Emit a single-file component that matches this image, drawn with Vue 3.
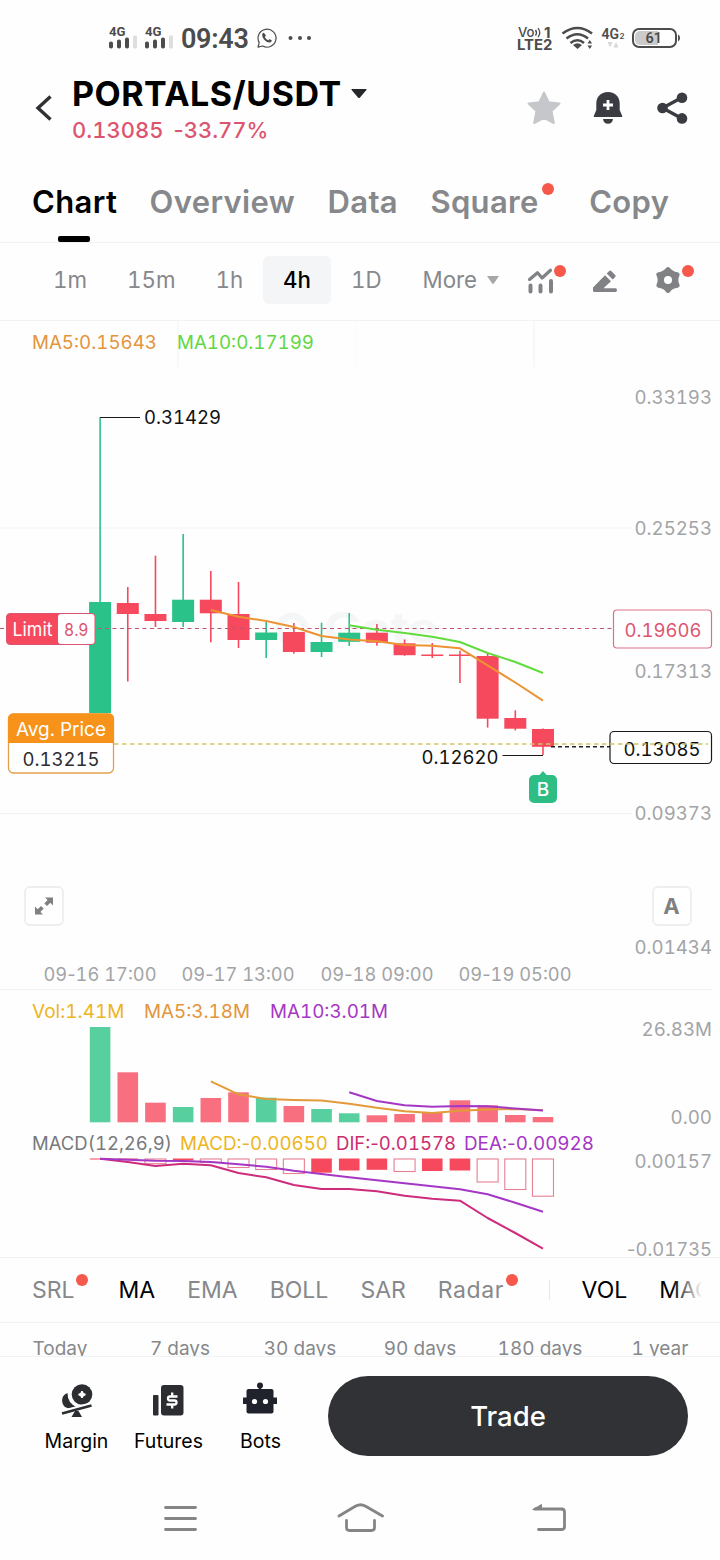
<template>
  <div class="screen">
    <div class="status-bar">
      <svg class="signals" width="70" height="30" viewBox="105 22 70 30">
        <g v-for="x in [109, 145]" :key="x">
          <text :x="x" y="35.500" class="net-label" textLength="16.500" lengthAdjust="spacingAndGlyphs">4G</text>
          <rect :x="x" y="41.500" width="4" height="7" rx="1.8" />
          <rect :x="x + 8" y="39.500" width="4" height="9" rx="1.8" />
          <rect :x="x + 16" y="37.500" width="4" height="11" rx="1.8" />
          <rect :x="x + 24" y="35.500" width="4" height="13" rx="1" class="dim" />
        </g>
      </svg>
      <span class="clock">09:43</span>
      <svg class="whatsapp" width="22" height="22" viewBox="0 0 22 22">
        <path d="M2 20.200 3.200 15.600A9 9 0 1 1 6.600 19Z" fill="none" stroke="#4c4c4c" stroke-width="1.200" stroke-linejoin="round" />
        <path d="M7.800 5.800c-1 .2-1.800 1.200-1.600 2.600.6 3.400 3.400 6.400 7 7 1.400.2 2.500-.6 2.700-1.800l-2.400-1.500-1.200 1.200c-1.500-.6-2.800-1.900-3.500-3.400L10 8.500Z" fill="#4c4c4c" />
      </svg>
      <svg class="dots" width="24" height="6" viewBox="0 0 24 6">
        <circle cx="2.500" cy="3" r="2" /><circle cx="12" cy="3" r="2" /><circle cx="21" cy="3" r="2" />
      </svg>
      <svg class="status-right" width="170" height="34" viewBox="515 20 170 34">
        <text x="518" y="36.500" class="volte light" textLength="16.500" lengthAdjust="spacingAndGlyphs">Vo</text>
        <path d="M535.500 30q2 2.800 0 5.600M538 28.200q3.400 4.400 0 9" fill="none" stroke="#4c4c4c" stroke-width="1.300" />
        <text x="544" y="37.500" class="volte">1</text>
        <text x="517" y="50" class="volte" textLength="35.500" lengthAdjust="spacingAndGlyphs">LTE2</text>
        <g fill="none" stroke="#4c4c4c" stroke-width="2.600">
          <path d="M562.500 33.500q15-11 29.500 0" />
          <path d="M566.500 38.500q11-8.500 21.500 0" />
          <path d="M570.500 43q7-5.500 13.500 0" />
        </g>
        <path d="M573 45q4.500-3.500 9 0l-4.500 4Z" fill="#4c4c4c" />
        <path d="M587.500 43.500l2.300-3.500 2.300 3.500ZM587.500 45.500l2.300 3.500 2.300-3.500Z" fill="#4c4c4c" />
        <text x="601.500" y="38.500" class="net-big" textLength="17.500" lengthAdjust="spacingAndGlyphs">4G</text>
        <text x="619.500" y="38.500" class="net-sub">2</text>
        <path d="M607.500 42h5l-2.500 5.500ZM613.500 47.500h5l-2.500-5.500Z" fill="#d8d8d8" />
        <rect x="633" y="29" width="43" height="18" rx="6" fill="#fff" stroke="#4c4c4c" stroke-width="2" />
        <path d="M640 31h18v14h-18a5 5 0 0 1-5-5v-4a5 5 0 0 1 5-5Z" fill="#cbcbcb" />
        <path d="M678 34.500q2 .5 2 3.500t-2 3.500Z" fill="#4c4c4c" />
        <text x="645.500" y="43" class="battery" textLength="16.500" lengthAdjust="spacingAndGlyphs">61</text>
      </svg>
    </div>

    <header class="pair-header">
      <svg class="back" width="20" height="30" viewBox="0 0 20 30">
        <path d="M18.500 3.500 6 15 18.500 26.500" fill="none" stroke="#2f3135" stroke-width="3.400" />
      </svg>
      <div class="pair">
        <div class="pair-name">
          PORTALS/USDT
          <svg width="16" height="10" viewBox="0 0 16 10"><path d="M1 0h14q1 0 .4 1L9 8.500q-1 1-2 0L.6 1Q0 0 1 0Z" fill="#25272b" /></svg>
        </div>
        <div class="pair-price"><span>0.13085</span><span><i class="hyphen">-</i>33.77%</span></div>
      </div>
      <div class="header-actions">
        <svg width="36" height="36" viewBox="0 0 36 36">
          <path d="M18 2.500 22.600 12.200 33.500 13.600 25.500 21 27.800 33 18 27.800 8.200 33 10.500 21 2.500 13.600 13.400 12.200Z" fill="#c5c7ca" stroke="#c5c7ca" stroke-width="2" stroke-linejoin="round" />
        </svg>
        <svg width="36" height="36" viewBox="0 0 36 36">
          <path d="M18 2C10.500 2 6.300 7.200 6.300 13.500V20L3.800 26V27H32.200V26L29.700 20V13.500C29.700 7.200 25.500 2 18 2Z" fill="#3b3c42" />
          <path d="M13 29h10q-.5 4.800-5 4.800T13 29Z" fill="#3b3c42" />
          <path d="M18 10v10M13 15h10" stroke="#fff" stroke-width="2.800" />
        </svg>
        <svg width="36" height="36" viewBox="0 0 36 36">
          <path d="M28 7.500 8.500 18l19.500 10.500" fill="none" stroke="#3b3c42" stroke-width="3.400" />
          <circle cx="28" cy="7.700" r="5.300" fill="#3b3c42" />
          <circle cx="8.500" cy="18" r="5.300" fill="#3b3c42" />
          <circle cx="28" cy="28.400" r="5.300" fill="#3b3c42" />
        </svg>
      </div>
    </header>

    <nav class="tabs">
      <span v-for="tab in tabs" :key="tab.label" class="tab" :class="{ active: tab.label === activeTab, dotted: tab.dot }" @click="activeTab = tab.label">{{ tab.label }}</span>
    </nav>

    <div class="intervals">
      <span v-for="item in intervals" :key="item" class="interval" :class="{ active: item === activeInterval }" @click="activeInterval = item">{{ item }}</span>
      <span class="interval more">More
        <svg width="12" height="8" viewBox="0 0 12 8"><path d="M0 0h12L6.800 7.500q-.8.8-1.600 0Z" fill="#a5a7aa" /></svg>
      </span>
      <div class="tools">
        <svg width="32" height="32" viewBox="525 264 32 32">
          <path d="M529.500 279.500l8-6.800 4.600 5.300 8.400-7.700" fill="none" stroke="#808286" stroke-width="3.200" stroke-linecap="round" stroke-linejoin="round" />
          <path d="M530.500 285.500v6M540.500 285.500v6M551 281v10.500" stroke="#808286" stroke-width="4" stroke-linecap="round" />
        </svg>
        <svg width="32" height="32" viewBox="588 264 32 32">
          <path d="M592 287.500 604 275.200 610 281.300 602.500 288.200h12q1.500 0 1.500 1.900t-1.500 1.900H593.500q-1.500 0-1.500-1.500Z" fill="#808286" />
          <path d="M605.700 273.500 608.200 270.900q1-1 2 0L614.200 275q1 1 0 2L611.700 279.600Z" fill="#808286" />
        </svg>
        <svg width="32" height="32" viewBox="-16 -16 32 32">
          <path d="M0-10.500Q3.300-6 9.200-5.400Q6.600 0 9.200 5.400Q3.300 6 0 10.500Q-3.300 6-9.200 5.400Q-6.600 0-9.200-5.400Q-3.300-6 0-10.500Z" fill="#808286" stroke="#808286" stroke-width="4.800" stroke-linejoin="round" />
          <circle r="4" fill="#fff" />
        </svg>
      </div>
    </div>

    <svg class="pane" width="720" height="669" viewBox="0 321 720 669">
      <path d="M178 321v46M534 321v46M0 528h632M0 813.500h632M0 989.500h712" class="grid" />
      <path d="M356.500 321v46" class="grid faint" />
      <g class="watermark">
        <circle cx="292" cy="629" r="13" />
        <text x="324" y="643" textLength="114" lengthAdjust="spacingAndGlyphs">Gate</text>
      </g>
      <text x="32" y="349" class="t orange" textLength="125" lengthAdjust="spacingAndGlyphs">MA5:0.15643</text>
      <text x="177" y="349" class="t lime" textLength="137" lengthAdjust="spacingAndGlyphs">MA10:0.17199</text>

      <g v-for="(c, i) in candles" :key="i" :class="c[0] > 0 ? 'up' : 'down'">
        <rect :x="cx(i) - 0.8" :y="c[1]" width="1.6" :height="c[4] - c[1]" />
        <rect :x="cx(i) - 11" :y="c[2]" width="22" :height="c[3] - c[2]" />
      </g>
      <path d="M0 628.500H613" stroke="#bd5670" stroke-width="1" stroke-dasharray="4 3.500" />
      <polyline :points="line(priceMa5, 4)" class="line" stroke="#ec9332" />
      <polyline :points="line(priceMa10, 9)" class="line" stroke="#62dc3d" />

      <path d="M100 417.500H140M502.500 755.500H543" class="marker" />
      <text x="144" y="423.500" class="t black" textLength="77" lengthAdjust="spacingAndGlyphs">0.31429</text>
      <text x="421.500" y="763.500" class="t black" textLength="77" lengthAdjust="spacingAndGlyphs">0.12620</text>
      <path d="M551 746.700H610" stroke="#222" stroke-width="1.400" stroke-dasharray="4 3" />

      <text v-for="l in priceLabels" :key="l[0]" x="634.500" :y="l[1]" class="t gray" textLength="77.500" lengthAdjust="spacingAndGlyphs">{{ l[0] }}</text>
      <rect x="613.500" y="610" width="98" height="38" rx="3.500" fill="#fff" stroke="#dc7088" stroke-width="1.200" />
      <text x="624.500" y="636.500" class="t rose" textLength="77" lengthAdjust="spacingAndGlyphs">0.19606</text>
      <rect x="610" y="731.500" width="101.500" height="32" rx="4" fill="#fff" stroke="#1a1a1a" stroke-width="1.200" />
      <text x="623.500" y="755.500" class="t black" textLength="77" lengthAdjust="spacingAndGlyphs">0.13085</text>
      <path d="M114 744H708" stroke="#cfc36c" stroke-width="1.400" stroke-dasharray="4.500 3.500" />

      <rect x="6.500" y="613.500" width="88.500" height="31" rx="3.500" fill="#f7495d" stroke="#dc5570" />
      <rect x="58" y="614" width="36.500" height="30" rx="3" fill="#fff" />
      <text x="12.500" y="636" class="t white" textLength="40" lengthAdjust="spacingAndGlyphs">Limit</text>
      <text x="64" y="636" class="t rose small" textLength="24.500" lengthAdjust="spacingAndGlyphs">8.9</text>

      <rect x="8.500" y="714" width="105" height="59" rx="5" fill="#fff" stroke="#e2a04a" stroke-width="1.300" />
      <path d="M8 743v-24q0-5.500 5.500-5.500h95q5.500 0 5.500 5.500v24Z" fill="#f7931a" />
      <text x="16" y="736" class="t avg" textLength="90" lengthAdjust="spacingAndGlyphs">Avg. Price</text>
      <text x="22.500" y="765.500" class="t dark" textLength="77" lengthAdjust="spacingAndGlyphs">0.13215</text>

      <path d="M538.500 776l4.500-5 4.500 5Z" fill="#2ebd85" />
      <rect x="529" y="775" width="28" height="28" rx="5" fill="#2ebd85" />
      <text x="543" y="796" class="buy" text-anchor="middle">B</text>

      <rect x="25" y="887" width="38" height="38" rx="5" class="tool-box" />
      <path d="M45 897.500h8v8l-2.700-2.700-3.300 3.300-2.700-2.700 3.300-3.300ZM43 914.500h-8v-8l2.700 2.700 3.300-3.300 2.700 2.700-3.300 3.300Z" fill="#808080" />
      <rect x="653" y="887" width="38" height="38" rx="5" class="tool-box" />
      <text x="671.500" y="914" class="auto" text-anchor="middle">A</text>

      <text v-for="d in dates" :key="d[1]" :x="d[2]" y="981" class="t gray" textLength="113" lengthAdjust="spacingAndGlyphs">09<tspan class="hyphen">-</tspan>{{ d[0] }}&nbsp;{{ d[1] }}</text>
    </svg>

    <svg class="pane" width="720" height="140" viewBox="0 990 720 140">
      <text x="32" y="1018" class="t yellow" textLength="92.500" lengthAdjust="spacingAndGlyphs">Vol:1.41M</text>
      <text x="144" y="1018" class="t orange" textLength="106" lengthAdjust="spacingAndGlyphs">MA5:3.18M</text>
      <text x="270" y="1018" class="t purple" textLength="118" lengthAdjust="spacingAndGlyphs">MA10:3.01M</text>
      <rect v-for="(y, i) in volumes" :key="i" :x="cx(i) - 10.3" :y="y" width="20.6" :height="1122.3 - y" :class="candles[i][0] > 0 ? 'vol-up' : 'vol-down'" />
      <polyline :points="line(volMa5, 4)" class="line" stroke="#e39a38" />
      <polyline :points="line(volMa10, 9)" class="line" stroke="#a437c4" />
      <text x="641.500" y="1035.500" class="t gray" textLength="70.500" lengthAdjust="spacingAndGlyphs">26.83M</text>
      <text x="670.500" y="1123.500" class="t gray" textLength="41.500" lengthAdjust="spacingAndGlyphs">0.00</text>
    </svg>

    <svg class="pane" width="720" height="128" viewBox="0 1130 720 128">
      <text x="32" y="1150" class="t gray-dark" textLength="140" lengthAdjust="spacingAndGlyphs">MACD(12,26,9)</text>
      <text x="180" y="1150" class="t yellow" textLength="148" lengthAdjust="spacingAndGlyphs">MACD:<tspan class="hyphen">-</tspan>0.00650</text>
      <text x="336" y="1150" class="t magenta" textLength="120" lengthAdjust="spacingAndGlyphs">DIF:<tspan class="hyphen">-</tspan>0.01578</text>
      <text x="464" y="1150" class="t purple" textLength="130" lengthAdjust="spacingAndGlyphs">DEA:<tspan class="hyphen">-</tspan>0.00928</text>
      <g v-for="(m, i) in macd" :key="i">
        <rect v-if="m[1]" :x="cx(i) - 10.3" y="1158.500" width="20.6" :height="m[0] - 1158.5" fill="#f7495d" />
        <rect v-else :x="cx(i) - 10.5" y="1159" width="21" :height="m[0] - 1159" fill="#fff" stroke="#e87f92" stroke-width="1.100" />
      </g>
      <polyline :points="line(dif, 0)" class="line" stroke="#cd2c7c" />
      <polyline :points="line(dea, 0)" class="line" stroke="#a437c4" />
      <text x="634.500" y="1167.500" class="t gray" textLength="77.500" lengthAdjust="spacingAndGlyphs">0.00157</text>
      <path d="M0 1257.500H720" class="grid" />
      <text x="627" y="1255.500" class="t gray" textLength="85" lengthAdjust="spacingAndGlyphs"><tspan class="hyphen">-</tspan>0.01735</text>
    </svg>

    <div class="indicators">
      <span v-for="name in mainIndicators" :key="name.label" class="indicator" :class="{ active: name.active, dotted: name.dot }">{{ name.label }}</span>
      <i class="divider"></i>
      <span class="indicator active">VOL</span>
      <span class="indicator active">MACD</span>
    </div>

    <div class="ranges">
      <span v-for="r in ranges" :key="r">{{ r }}</span>
    </div>

    <footer class="bottom">
      <div class="shortcut">
        <svg width="36" height="36" viewBox="58 1382 36 36">
          <path d="M67.500 1393A8 8 0 0 0 68 1408.300Q74 1409 76.500 1407Q67.500 1403 67.500 1393Z" fill="#2c2d31" />
          <circle cx="82" cy="1394.500" r="10.300" fill="#2c2d31" />
          <path d="M82 1391Q82.500 1394 85.500 1394.500 82.500 1395 82 1398 81.500 1395 78.500 1394.500 81.500 1394 82 1391Z" fill="#fff" stroke="#fff" stroke-width="1.400" />
          <path d="M61.500 1412.500 91.500 1404.500" stroke="#fff" stroke-width="4.600" />
          <path d="M62 1413.500 91.500 1405.500" stroke="#2c2d31" stroke-width="2.600" />
          <path d="M75 1411h3.500l3.500 6H71.500Z" fill="#2c2d31" />
        </svg>
        <span>Margin</span>
      </div>
      <div class="shortcut">
        <svg width="36" height="36" viewBox="150 1382 36 36">
          <rect x="153" y="1395" width="5.500" height="20.500" rx="1" fill="#2c2d31" />
          <rect x="161" y="1385" width="22.500" height="30.500" rx="3" fill="#2c2d31" />
          <path d="M177.500 1396.500H170a2 2 0 0 0 0 4h4.500a2 2 0 0 1 0 4H166.500M172.200 1392.500v4M172.200 1404.500v4" fill="none" stroke="#fff" stroke-width="2.300" />
        </svg>
        <span>Futures</span>
      </div>
      <div class="shortcut">
        <svg width="36" height="36" viewBox="242 1382 36 36">
          <rect x="246.500" y="1389" width="27" height="24.500" rx="2" fill="#20222c" />
          <path d="M243 1397.500h34v6.500h-34Z" fill="#20222c" />
          <circle cx="260" cy="1385.500" r="3" fill="#20222c" />
          <path d="M260 1385v6" stroke="#20222c" stroke-width="2.400" />
          <circle cx="254.500" cy="1401.500" r="2.600" fill="#fff" /><circle cx="265.500" cy="1401.500" r="2.600" fill="#fff" />
        </svg>
        <span>Bots</span>
      </div>
      <button class="trade">Trade</button>
    </footer>

    <div class="system-nav">
      <svg width="48" height="36" viewBox="156 1500 48 36"><path d="M165.500 1507.500h30M165.500 1518.500h30M165.500 1529.500h30" /></svg>
      <svg width="48" height="36" viewBox="336 1500 48 36"><path d="M339 1516 354 1507Q360.500 1502.500 367 1507L382.500 1516M346.500 1520.500V1527.500Q346.500 1530.500 349.500 1530.500H371.500Q374.500 1530.500 374.500 1527.500V1520.500" /></svg>
      <svg width="48" height="36" viewBox="524 1500 48 36"><path d="M538.500 1529.500H562Q564.500 1529.500 564.500 1526.500V1512Q564.500 1509 561.500 1509H535" /><path d="M533 1509.500 541.500 1504.500V1509Z" class="solid" /></svg>
    </div>
  </div>
</template>

<script setup>
import { ref } from "vue";

const activeTab = ref("Chart");
const activeInterval = ref("4h");

const tabs = [
  { label: "Chart" },
  { label: "Overview" },
  { label: "Data" },
  { label: "Square", dot: true },
  { label: "Copy" },
];
const intervals = ["1m", "15m", "1h", "4h", "1D"];
const mainIndicators = [
  { label: "SRL", dot: true },
  { label: "MA", active: true },
  { label: "EMA" },
  { label: "BOLL" },
  { label: "SAR" },
  { label: "Radar", dot: true },
];
const ranges = ["Today", "7 days", "30 days", "90 days", "180 days", "1 year"];

// direction, high, body top, body bottom, low
const candles = [
  [1, 417.5, 602, 713, 713],
  [-1, 587, 603, 614, 681.5],
  [-1, 555.7, 614, 621, 627],
  [1, 534, 599.7, 622, 627],
  [-1, 571, 599.7, 613.3, 642.3],
  [-1, 582, 614, 640, 648],
  [1, 622, 632.5, 640, 658],
  [-1, 623, 632, 652, 653.7],
  [1, 622.7, 642, 652, 657],
  [1, 613, 632.7, 641.8, 646],
  [-1, 624, 632.7, 642.7, 645.7],
  [-1, 639.5, 643.3, 655.2, 655.8],
  [-1, 643, 654.5, 656, 658],
  [-1, 650.7, 654.5, 656, 683],
  [-1, 653.7, 656, 718.7, 727.6],
  [-1, 710.3, 718, 728.7, 730.4],
  [-1, 728.5, 729, 746.8, 755],
];
const priceMa5 = [610, 616.7, 621, 627, 636, 639.5, 641.3, 645, 645.7, 648.3, 665.3, 682.5, 700.7];
const priceMa10 = [625.3, 629.7, 633, 636.7, 642, 653, 662, 673];
const priceLabels = [
  ["0.33193", 403.5],
  ["0.25253", 534.5],
  ["0.17313", 677.5],
  ["0.09373", 819.5],
  ["0.01434", 953.5],
];
const dates = [
  ["16", "17:00", 43.5],
  ["17", "13:00", 181.5],
  ["18", "09:00", 320.5],
  ["19", "05:00", 458.5],
];

const volumes = [1027, 1072.3, 1102.7, 1107, 1098, 1092.3, 1097.7, 1106, 1109, 1113.3, 1115.3, 1114, 1112.5, 1100.3, 1105.3, 1115, 1117];
const volMa5 = [1081.3, 1094.3, 1099, 1100, 1100.5, 1103.7, 1107.7, 1111.3, 1113, 1110.7, 1109.5, 1109, 1110.3];
const volMa10 = [1092.3, 1101, 1105.3, 1106.7, 1106, 1106.3, 1108.5, 1110.5];

// bar bottom, filled
const macd = [
  [1159.5, true], [1159, true], [1163.7, false], [1160.5, true], [1162.3, false], [1167.5, false],
  [1169.5, false], [1173.5, false], [1172.7, true], [1170.5, true], [1169.8, true], [1171.5, false],
  [1171, true], [1170.5, true], [1182, false], [1189.5, false], [1196.2, false],
];
const dif = [1158.7, 1162, 1166, 1163.7, 1165.3, 1173, 1177.3, 1185, 1189, 1189, 1191.3, 1195.7, 1198.7, 1200.7, 1218, 1233, 1248.7];
const dea = [1158.7, 1159.7, 1160.7, 1161, 1162, 1164.3, 1166.7, 1170.7, 1174, 1177.3, 1180.3, 1183.3, 1186.3, 1189.3, 1194.3, 1202.7, 1211.7];

function cx(i) {
  return 100.1 + i * 27.68;
}

function line(values, start) {
  return values.map((y, i) => `${cx(i + start)},${y}`).join(" ");
}
</script>

<style>
body {
  margin: 0;
  background: #fefefe;
}
</style>

<style scoped>
.screen {
  width: 720px;
  height: 1560px;
  overflow: hidden;
  background: #fefefe;
  font-family: Inter, "Liberation Sans", sans-serif;
  font-feature-settings: "tnum";
  color: #000;
}
svg {
  display: block;
  flex-shrink: 0;
}
.hyphen {
  font-style: normal;
  font-feature-settings: normal;
}
.status-bar {
  height: 76px;
  display: flex;
  align-items: center;
  padding: 0 35px 0 105px;
  box-sizing: border-box;
  fill: #4c4c4c;
  font-family: Roboto, sans-serif;
}
.signals {
  margin-top: -2px;
}
.dim {
  fill: #dedede;
}
.net-label {
  font: 700 13.5px Roboto, sans-serif;
}
.clock {
  margin-left: 6px;
  width: 66px;
  font-size: 27px;
  font-weight: 600;
  letter-spacing: -0.3px;
  color: #4c4c4c;
  padding-top: 2px;
}
.whatsapp {
  margin-left: 9px;
}
.dots {
  margin-left: 10px;
}
.status-right {
  margin-left: auto;
  margin-top: -2px;
}
.volte {
  font: 700 15px Inter, sans-serif;
}
.light {
  font-weight: 500;
  font-size: 13.5px;
}
.net-big {
  font: 600 15px Roboto, sans-serif;
}
.net-sub {
  font: 600 8px Inter, sans-serif;
}
.battery {
  font: 600 15px Roboto, sans-serif;
}
.pair-header {
  height: 84px;
  display: flex;
  align-items: flex-start;
  padding: 0 30px 0 32px;
}
.back {
  margin-top: 17px;
}
.pair {
  margin-left: 20px;
}
.pair-name {
  display: flex;
  align-items: center;
  gap: 9px;
  font-size: 34px;
  line-height: 36px;
  font-weight: 700;
  letter-spacing: 0.5px;
}
.pair-price {
  display: flex;
  gap: 10px;
  font-size: 22px;
  line-height: 36px;
  font-weight: 500;
  color: #dc5570;
}
.header-actions {
  display: flex;
  gap: 28px;
  margin: 14px 0 0 auto;
}
.tabs {
  height: 82px;
  display: flex;
  gap: 32.4px;
  padding-left: 32px;
  border-bottom: 1px solid #f1f2f3;
}
.tab {
  position: relative;
  line-height: 84px;
  font-size: 31px;
  font-weight: 600;
  letter-spacing: 0.35px;
  color: #86888b;
}
.tab.active {
  color: #000;
}
.tab.active::after {
  content: "";
  position: absolute;
  left: 25.5px;
  bottom: 0;
  width: 32px;
  height: 6px;
  border-radius: 2px;
  background: #000;
}
.tab.dotted {
  margin-right: 18px;
}
.tab.dotted::after,
.indicator.dotted::after {
  content: "";
  position: absolute;
  width: 12px;
  height: 12px;
  border-radius: 50%;
  background: #f6594b;
}
.tab.dotted::after {
  right: -15px;
  top: 23px;
}
.intervals {
  height: 74px;
  display: flex;
  align-items: center;
  padding: 0 0 3px 33px;
  border-bottom: 1px solid #f1f2f3;
  font-size: 22.3px;
  color: #86888b;
}
.interval {
  padding: 0 20px;
  line-height: 48px;
  height: 48px;
}
.interval.active {
  border-radius: 6px;
  background: #f4f5f7;
  color: #000;
  font-weight: 500;
}
.more {
  display: flex;
  align-items: center;
  gap: 10px;
  padding: 0 0 0 21px;
}
.tools {
  position: relative;
  display: flex;
  gap: 31.5px;
  margin: 0 36px 0 auto;
}
.tools::before,
.tools::after {
  content: "";
  position: absolute;
  top: 1px;
  left: 29px;
  width: 12px;
  height: 12px;
  border-radius: 50%;
  background: #f6594b;
}
.tools::after {
  left: 157px;
}
.t {
  font-size: 18.5px;
}
.t.small {
  font-size: 17.5px;
}
.grid {
  fill: none;
  stroke: #f1f2f3;
  stroke-width: 1.2;
}
.grid.faint {
  stroke: #fafafa;
}
.watermark {
  fill: #f5f6f8;
}
.watermark circle {
  fill: none;
  stroke: #f5f6f8;
  stroke-width: 7;
}
.watermark text {
  font-size: 42px;
  font-weight: 700;
}
.line {
  fill: none;
  stroke-width: 2;
  stroke-linejoin: round;
}
.marker {
  fill: none;
  stroke: #1a1a1a;
  stroke-width: 1.2;
}
.up { fill: #2bc289; }
.down { fill: #f7495d; }
.vol-up { fill: #57cf9f; }
.vol-down { fill: #f86f80; }
.orange { fill: #e4943b; }
.lime { fill: #60d843; }
.black { fill: #111; }
.dark { fill: #2c2d31; }
.gray { fill: #a2a4a6; }
.gray-dark { fill: #77797c; }
.rose { fill: #dc5570; }
.white { fill: #fff; }
.avg { fill: #fff; font-size: 19px; }
.yellow { fill: #edb521; }
.purple { fill: #a437c4; }
.magenta { fill: #cd2c6c; }
.buy {
  fill: #fff;
  font-size: 19px;
  font-weight: 500;
}
.tool-box {
  fill: #fff;
  stroke: #eeeeef;
  stroke-width: 1.8;
}
.auto {
  fill: #808080;
  font-size: 22px;
  font-weight: 700;
}
.indicators {
  position: relative;
  height: 64px;
  display: flex;
  align-items: center;
  gap: 32px;
  margin-right: 18px;
  padding-left: 32px;
  overflow: hidden;
  font-size: 23px;
  color: #86888b;
}
.indicators::after {
  content: "";
  position: absolute;
  right: 0;
  top: 0;
  width: 30px;
  height: 64px;
  background: linear-gradient(to right, rgba(254, 254, 254, 0), #fefefe);
}
.indicator {
  position: relative;
  line-height: 64px;
}
.indicator.active {
  color: #000;
}
.indicator.dotted {
  margin-right: 12px;
}
.indicator.dotted::after {
  right: -13.5px;
  top: 16px;
}
.indicator:nth-child(6) {
  letter-spacing: 0.6px;
}
.divider {
  flex: none;
  width: 1px;
  height: 20px;
  margin-left: 0.5px;
  background: #e6e7e9;
}
.ranges {
  height: 33px;
  display: grid;
  grid-template-columns: repeat(6, 120px);
  border-top: 1px solid #f1f2f3;
  overflow: hidden;
  font-size: 19px;
  line-height: 52px;
  text-align: center;
  color: #86888b;
}
.bottom {
  height: 120px;
  box-sizing: border-box;
  display: flex;
  padding: 19px 32px 0 30px;
  border-top: 1px solid #f1f2f3;
  background: #fefefe;
}
.shortcut {
  width: 92px;
  display: flex;
  flex-direction: column;
  align-items: center;
  padding-top: 6px;
  font-size: 19.5px;
  line-height: 24px;
}
.shortcut span {
  margin: 11px 0 0 1px;
}
.trade {
  width: 360px;
  height: 80px;
  margin-left: auto;
  border: none;
  border-radius: 40px;
  background: #303236;
  color: #fff;
  font-family: inherit;
  font-size: 27.5px;
  font-weight: 500;
}
.system-nav {
  height: 84px;
  display: flex;
  align-items: center;
  padding-left: 156px;
  fill: none;
  stroke: #858585;
  stroke-width: 2.8;
  stroke-linecap: round;
}
.system-nav svg {
  margin-right: 132px;
}
.system-nav svg:nth-child(2) {
  margin-right: 140px;
}
.solid {
  fill: #858585;
  stroke-width: 1;
}
</style>
